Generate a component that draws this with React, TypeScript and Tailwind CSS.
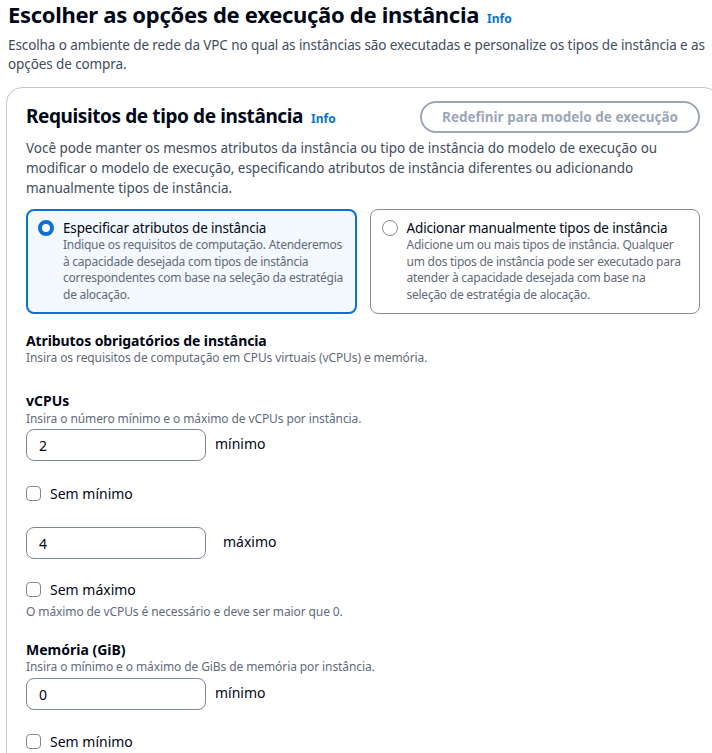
import React from "react";

const FONT = "font-['Noto_Sans','Open_Sans',sans-serif]";

function InfoLink() {
	return <span className="ml-2 text-[12px] font-bold tracking-normal text-[#0972d3]">Info</span>;
}

interface TileProps {
	selected: boolean;
	title: string;
	description: React.ReactNode;
}

function Tile({ selected, title, description }: TileProps) {
	return (
		<div
			className={
				selected
					? "flex flex-1 gap-[9px] rounded-lg border-2 border-[#0972d3] bg-[#f2f8fd] pb-[9px] pl-[10px] pr-[6px] pt-[8px]"
					: "flex flex-1 gap-[9px] rounded-lg border border-[#8c8c94] bg-white pb-[10px] pl-[11px] pr-[7px] pt-[9px]"
			}
		>
			<div className="pt-[1px]">
				{selected ? (
					<div className="h-4 w-4 rounded-full border-[4px] border-[#0972d3] bg-white" />
				) : (
					<div className="h-4 w-4 rounded-full border border-[#8c8c94] bg-white" />
				)}
			</div>
			<div className="flex-1">
				<div className="text-[13.5px] leading-[18px] tracking-[-0.15px] text-[#000716]">{title}</div>
				<p className="text-[12px] leading-[16.5px] tracking-[-0.25px] text-[#5f6b7a]">{description}</p>
			</div>
		</div>
	);
}

function NumberInput({ value, label, gap }: { value: string; label: string; gap: string }) {
	return (
		<div className="flex items-start">
			<div className="flex h-[32px] w-[180px] items-center rounded-lg border border-[#7d8998] px-3 text-[14px] text-[#000716]">
				{value}
			</div>
			<span className={`${gap} pt-[4px] text-[14px] text-[#000716]`}>{label}</span>
		</div>
	);
}

function Checkbox({ label }: { label: string }) {
	return (
		<label className="flex items-center gap-[9px] text-[14px] text-[#000716]">
			<span className="h-[15px] w-[15px] rounded-[4px] border border-[#7d8998] bg-white" />
			{label}
		</label>
	);
}

export default function App() {
	return (
		<div className={`h-[753px] w-[712px] overflow-hidden bg-white ${FONT}`}>
			<header className="pl-2">
				<h1 className="flex items-baseline text-[22px] font-bold leading-[28px] tracking-[-0.3px] text-[#000716]">
					Escolher as opções de execução de instância
					<InfoLink />
				</h1>
				<p className="mt-[3px] text-[13.5px] leading-[19px] tracking-[-0.1px] text-[#414d5c]">
					Escolha o ambiente de rede da VPC no qual as instâncias são executadas e personalize os tipos de instância e as
					opções de compra.
				</p>
			</header>

			<section className="-mr-[8px] ml-[6px] mt-[13px] rounded-t-2xl border border-[#c6c6cd] px-[19px] pb-8 pt-[13px]">
				<div className="flex items-center justify-between">
					<h2 className="flex items-baseline text-[19px] font-bold leading-[26px] tracking-[-0.4px] text-[#000716]">
						Requisitos de tipo de instância
						<InfoLink />
					</h2>
					<button className="rounded-full border-2 border-[#9ba7b6] px-5 py-[4px] text-[13.5px] font-bold leading-[20px] text-[#9ba7b6]">
						Redefinir para modelo de execução
					</button>
				</div>
				<p className="mt-[5px] pr-6 text-[13.5px] leading-[20px] tracking-[-0.03px] text-[#414d5c]">
					Você pode manter os mesmos atributos da instância ou tipo de instância do modelo de execução ou modificar o
					modelo de execução, especificando atributos de instância diferentes ou adicionando manualmente tipos de
					instância.
				</p>

				<div className="mt-[11px] flex gap-[13px]">
					<Tile
						selected
						title="Especificar atributos de instância"
						description="Indique os requisitos de computação. Atenderemos à capacidade desejada com tipos de instância correspondentes com base na seleção da estratégia de alocação."
					/>
					<Tile
						selected={false}
						title="Adicionar manualmente tipos de instância"
						description={
							<>
								Adicione um ou mais tipos de instância. Qualquer um dos tipos de instância pode ser executado para
								atender à capacidade desejada com base na
								<br />
								seleção de estratégia de alocação.
							</>
						}
					/>
				</div>

				<div className="mt-[18px]">
					<h3 className="text-[14px] font-bold leading-[18px] tracking-[-0.1px] text-[#000716]">
						Atributos obrigatórios de instância
					</h3>
					<p className="text-[12px] leading-[16px] tracking-[-0.1px] text-[#5f6b7a]">
						Insira os requisitos de computação em CPUs virtuais (vCPUs) e memória.
					</p>
				</div>

				<div className="mt-[26px]">
					<h3 className="text-[14px] font-bold leading-[18px] text-[#000716]">vCPUs</h3>
					<p className="text-[12px] leading-[18px] tracking-[-0.1px] text-[#5f6b7a]">
						Insira o número mínimo e o máximo de vCPUs por instância.
					</p>
					<div className="mt-[1px]">
						<NumberInput value="2" label="mínimo" gap="ml-[9px]" />
					</div>
					<div className="mt-[22px]">
						<Checkbox label="Sem mínimo" />
					</div>
					<div className="mt-[23px]">
						<NumberInput value="4" label="máximo" gap="ml-[17px]" />
					</div>
					<div className="mt-[20px]">
						<Checkbox label="Sem máximo" />
					</div>
					<p className="mt-[4px] text-[12px] leading-[16px] tracking-[-0.1px] text-[#5f6b7a]">
						O máximo de vCPUs é necessário e deve ser maior que 0.
					</p>
				</div>

				<div className="mt-[21px]">
					<h3 className="text-[14px] font-bold leading-[18px] text-[#000716]">Memória (GiB)</h3>
					<p className="text-[12px] leading-[16px] tracking-[-0.1px] text-[#5f6b7a]">
						Insira o mínimo e o máximo de GiBs de memória por instância.
					</p>
					<div className="mt-[3px]">
						<NumberInput value="0" label="mínimo" gap="ml-[9px]" />
					</div>
					<div className="mt-[21px]">
						<Checkbox label="Sem mínimo" />
					</div>
				</div>
			</section>
		</div>
	);
}
